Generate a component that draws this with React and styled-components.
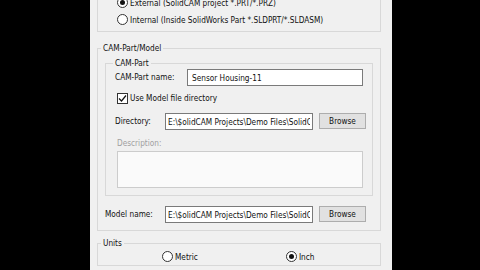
import styled, { createGlobalStyle } from 'styled-components'

const Global = createGlobalStyle`
  html, body {
    margin: 0;
    padding: 0;
    height: 100%;
    background: #000;
    overflow: hidden;
  }
  body {
    font-family: "DejaVu Sans Condensed", "DejaVu Sans", sans-serif;
    font-stretch: semi-condensed;
    font-size: 8.2px;
    color: #111;
  }
`

const Dialog = styled.div`
  width: 302px;
  height: 270px;
  margin-left: 90px;
  padding: 0 11px 0 7px;
  box-sizing: border-box;
  background: #f0f0f0;
  overflow: hidden;
`

const TopBox = styled.div`
  margin-top: -16px;
  padding: 9px 0 3px 19px;
  border: 1px solid #d8d8d8;
`

const Group = styled.fieldset`
  margin: ${p => p.$top}px 0 0;
  padding: 0;
  min-width: 0;
  border: 1px solid #d8d8d8;
`

const Legend = styled.legend`
  margin-left: ${p => p.$ml}px;
  padding: 0 2px;
  line-height: 14px;
`

const GroupBody = styled.div`
  padding: ${p => p.$pad};
`

const RadioRow = styled.label`
  display: flex;
  align-items: center;
  gap: 2px;
  height: 17px;
  white-space: nowrap;
`

const RadioDot = styled.span`
  width: 11px;
  height: 11px;
  box-sizing: border-box;
  border: 1px solid #333;
  border-radius: 50%;
  background: #fff;
  display: grid;
  place-items: center;
  flex: none;
  &::after {
    content: '';
    width: 5px;
    height: 5px;
    border-radius: 50%;
    background: #111;
    display: ${p => (p.$on ? 'block' : 'none')};
  }
`

const Row = styled.div`
  display: flex;
  align-items: flex-start;
  margin-top: ${p => p.$top}px;
`

const Label = styled.span`
  width: ${p => p.$w}px;
  flex: none;
  line-height: 17px;
  white-space: nowrap;
`

const Input = styled.input`
  width: ${p => (p.$w ? `${p.$w}px` : 'auto')};
  flex: ${p => (p.$w ? 'none' : '1')};
  min-width: 0;
  height: 17px;
  box-sizing: border-box;
  margin: 0;
  padding: 0 ${p => p.$px || 2}px;
  border: 1px solid #7a7a7a;
  background: #fff;
  font: inherit;
  color: #111;
  outline: none;
`

const Button = styled.button`
  width: 47px;
  height: 16px;
  flex: none;
  margin-left: 6px;
  padding: 0;
  box-sizing: border-box;
  border: 1px solid #adadad;
  background: #e1e1e1;
  font: inherit;
  line-height: 14px;
  color: #111;
`

const CheckRow = styled.label`
  display: flex;
  align-items: center;
  gap: 2px;
  height: 12px;
  margin: 6px 0 0 2px;
  white-space: nowrap;
`

const CheckBox = styled.span`
  width: 11px;
  height: 11px;
  box-sizing: border-box;
  border: 1px solid #333;
  background: #fff;
  display: grid;
  place-items: center;
  flex: none;
`

const Muted = styled.div`
  margin: 6px 0 0 2px;
  line-height: 14px;
  color: #a0a0a0;
`

const TextArea = styled.div`
  height: 37px;
  margin: 1px 0 0 2px;
  box-sizing: border-box;
  border: 1px solid #cccccc;
  background: #fafafa;
`

const Units = styled.div`
  display: flex;
  gap: 88px;
  margin-top: -2px;
  padding-left: 64px;
`

const Check = () => (
  <svg width="9" height="9" viewBox="0 0 9 9">
    <path d="M1 4.5 L3.5 7 L8 1.5" fill="none" stroke="#111" strokeWidth="1.2" />
  </svg>
)

const path = 'E:\\$olidCAM Projects\\Demo Files\\SolidCAM'

export default function App() {
  return (
    <>
      <Global />
      <Dialog>
        <TopBox>
          <RadioRow><RadioDot $on />External (SolidCAM project *.PRT/*.PRZ)</RadioRow>
          <RadioRow><RadioDot />Internal (Inside SolidWorks Part *.SLDPRT/*.SLDASM)</RadioRow>
        </TopBox>

        <Group $top={9}>
          <Legend $ml={3}>CAM-Part/Model</Legend>
          <GroupBody $pad="1px 7px 7px 7px">
            <Group $top={0}>
              <Legend $ml={7}>CAM-Part</Legend>
              <GroupBody $pad="0 9px 7px 9px">
                <Row $top={-1}>
                  <Label $w={72}>CAM-Part name:</Label>
                  <Input $px={4} readOnly value="Sensor Housing-11" />
                </Row>
                <CheckRow><CheckBox><Check /></CheckBox>Use Model file directory</CheckRow>
                <Row $top={9}>
                  <Label $w={50}>Directory:</Label>
                  <Input $w={148} readOnly value={path} />
                  <Button>Browse</Button>
                </Row>
                <Muted>Description:</Muted>
                <TextArea />
              </GroupBody>
            </Group>
            <Row $top={10}>
              <Label $w={60}>Model name:</Label>
              <Input $w={148} readOnly value={path} />
              <Button>Browse</Button>
            </Row>
          </GroupBody>
        </Group>

        <Group $top={5}>
          <Legend $ml={3}>Units</Legend>
          <Units>
            <RadioRow><RadioDot />Metric</RadioRow>
            <RadioRow><RadioDot $on />Inch</RadioRow>
          </Units>
        </Group>
      </Dialog>
    </>
  )
}
